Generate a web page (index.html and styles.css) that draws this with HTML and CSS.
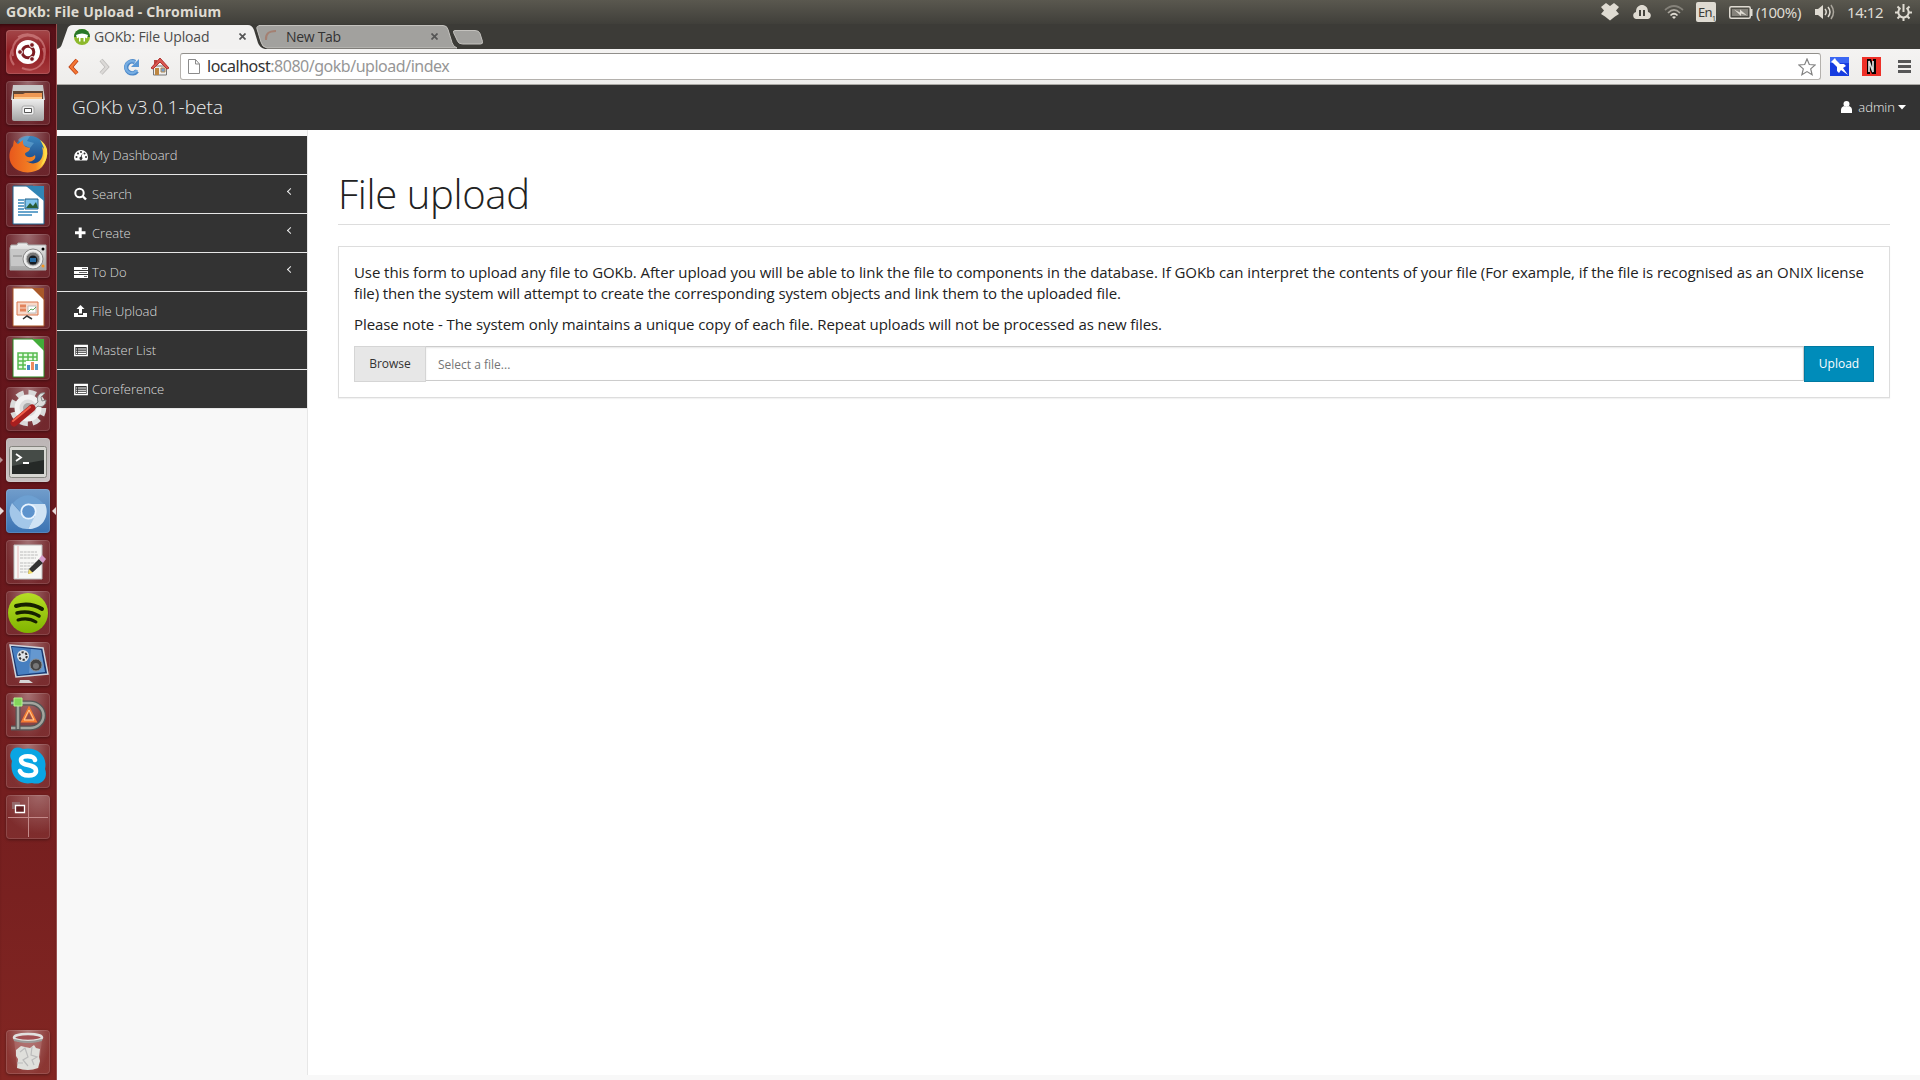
FILE: index.html
```html
<!DOCTYPE html>
<html lang="en">
<head>
<meta charset="utf-8">
<title>GOKb: File Upload</title>
<link rel="stylesheet" href="styles.css">
</head>
<body>
<header class="panel">
  <span class="panel-title">GOKb: File Upload - Chromium</span>
  <div class="indicators">
    <svg class="ind-dropbox" width="18" height="18" viewBox="0 0 18 18"><path d="M5 0 9 3 13 0 18 4 15 7.500 18 11 14 13.500 9 17.500 4 13.500 0 11 3 7.500 0 4Z"/></svg>
    <svg class="ind-cloud" width="18" height="14" viewBox="0 0 18 14"><path d="M3 14C-1 13-.5 7.500 3 7 3 2 6 0 9 0s6 2 6 7c3.500.5 4 6 0 7Z"/><path d="M7 5v6M11 5v6" stroke="#45443e" stroke-width="2"/></svg>
    <svg class="ind-wifi" width="20" height="14" viewBox="0 0 20 14" fill="none" stroke-width="1.700"><path d="M1 5Q10-3 19 5" stroke="#85827a"/><path d="M4 8Q10 2 16 8" stroke="#aaa69d"/><path d="M6.500 10.500Q10 7 13.500 10.500" stroke="#dfdbd2"/><path d="M8 12q2-1.500 4 0l-2 2Z" fill="#dfdbd2" stroke="none"/></svg>
    <span class="lang">En<sub>1</sub></span>
    <svg class="ind-battery" width="24" height="13" viewBox="0 0 24 13"><rect x=".75" y=".75" width="20.500" height="11.500" rx="1.500" fill="none" stroke="#dfdbd2" stroke-width="1.500"/><path d="M22 3h1.500v7H22z"/><path d="M3 3h16v7H3z" fill="#85827a"/><path d="M5 3.500 11 6.500V3.500l7 6-6-2v2.500Z"/></svg>
    <span class="percent">(100%)</span>
    <svg class="ind-sound" width="20" height="16" viewBox="0 0 20 16"><path d="M0 5h3l5-4v14l-5-4H0Z"/><g fill="none" stroke="#dfdbd2" stroke-width="1.500"><path d="M10 5q2.500 3 0 6M13 3q4 5 0 10"/><path d="M16 1q5 7 0 14" stroke="#aaa69d"/></g></svg>
    <span class="clock">14:12</span>
    <svg class="ind-gear" width="17" height="17" viewBox="0 0 17 17" fill="none" stroke="#dfdbd2" stroke-width="2"><path d="M5.500 4a5.200 5.200 0 1 0 6 0"/><path d="M8.500 0v8M0 8.500h3M14 8.500h3M8.500 14v3M2.500 2.500l2 2M14.500 2.500l-2 2M2.500 14.500l2-2M14.500 14.500l-2-2"/></svg>
  </div>
</header>
<div class="desktop">
<nav class="launcher">
  <div class="tile tile-dash"><svg viewBox="0 0 44 44"><g fill="none" stroke="#e5a0a0" stroke-opacity=".5" stroke-width="2"><path d="M7 26C4 10 19 0 32 9M37 18c6 15-8 26-21 20M12 7c14-8 31 3 26 21M8 35c-5-6-4-13-1-17"/></g><circle cx="22" cy="22" r="12" fill="#fff"/><circle cx="22" cy="22" r="5.800" fill="none" stroke="#7d1b21" stroke-width="3"/><g fill="#7d1b21" stroke="#fff"><circle cx="14" cy="22" r="2.400"/><circle cx="26" cy="15" r="2.400"/><circle cx="26" cy="29" r="2.400"/></g></svg></div>
  <div class="tile"><svg viewBox="0 0 44 44"><path d="M7 4h30l2 15H5Z" fill="#c9c9c9"/><path d="M7 10h30v8H7z" fill="#614534"/><path d="M8 13h9l2-1h17v7H8z" fill="#ee9854"/><path d="M8 16h28v2H8z" fill="#ffcb8f"/><path d="M6 18h32v20q0 2-2 2H8q-2 0-2-2Z" fill="url(#metal)"/><rect x="16" y="25" width="12" height="9" rx="2" fill="#eee" stroke="#aaa"/><path d="M18.500 27.500h7v4h-7z" fill="#fff" stroke="#555"/></svg></div>
  <div class="tile"><svg viewBox="0 0 44 44"><circle cx="24" cy="20" r="16" fill="url(#ocean)"/><path d="M12 8q4-5 12-4l-3 5 7 2-4 5-7-3Z" fill="#76b5dd" opacity=".5"/><path d="M34 8c8 8 9 19 2 27-8 8-24 7-30-2C2 27 3 18 7 14l1-6q2 3 4 4l5-4q-1 5 3 7l4 1c0 4-5 4-5 6 0 3 6 5 10 1 2 5-5 8-9 6 10 7 20-2 16-14 2 1 3 3 3 5q0-7-5-12Z" fill="url(#fox)"/><path d="M34 8q9 13 0 27 9-7 7-18-2-6-7-9Z" fill="#ffdc48"/></svg></div>
  <div class="tile"><svg viewBox="0 0 44 44"><path d="M7 3h20l11 11v27H7Z" fill="#fff" stroke="#1b638e"/><path d="M20 3h18v15Z" fill="#3185b5"/><path d="M12 17h6M12 20h6M12 23h6M12 26h6M12 29h20M12 32h14" stroke="#3788bc" stroke-width="1.600"/><path d="M19 16h13v10H19z" fill="#81c5ed" stroke="#1e618a"/><path d="m20 25 4-5 3 3 3-4 2 6Z" fill="#295d36"/></svg></div>
  <div class="tile"><svg viewBox="0 0 44 44"><path d="M5 11h6l1-2h9l1 2h18v25H4V14Z" fill="url(#metal)" stroke="#aaa"/><path d="M5 15h17v17H5z" fill="#c7c7c7"/><path d="M7 22h9" stroke="#888"/><circle cx="27" cy="25" r="10" fill="#eee" stroke="#888"/><circle cx="27" cy="25" r="7" fill="#777" stroke="#ccc"/><circle cx="27" cy="26" r="4.500" fill="#151b22"/><path d="M24 24h6v4h-6z" fill="#2569a1"/><circle cx="37" cy="15" r="1.500"/><circle cx="37" cy="32" r="1.500" fill="#f69522"/></svg></div>
  <div class="tile"><svg viewBox="0 0 44 44"><path d="M7 3h20l11 11v27H7Z" fill="#fff" stroke="#a85424"/><path d="M26 3h12v12Z" fill="#a95829"/><path d="M11 17h21v13H11z" fill="#f8d9ca" stroke="#d9764c"/><path d="M14 21h6M14 25h6" stroke="#e2835c" stroke-width="3"/><path d="M22 21h8v7h-8z" fill="#fff" stroke="#bbb"/><path d="m22 27 3-3 2 1 3-3" stroke="#5ba758" fill="none"/><path d="m17 34 4-3 5 3" fill="none" stroke="#333" stroke-width="1.500"/></svg></div>
  <div class="tile"><svg viewBox="0 0 44 44"><path d="M7 3h20l11 11v27H7Z" fill="#fff" stroke="#268920"/><path d="M26 3h12v12Z" fill="#42ac39"/><path d="M12 17h19v16H12zM12 21h19M12 25h19M12 29h12M17 17v16M22 17v16M27 17v9" fill="#e7fbe4" stroke="#58bc50" stroke-width="1.500"/><path d="M20 25h13v9H20z" fill="#fff"/><path d="M21 29h3v5h-3z" fill="#4088c5"/><path d="M25 26h3v8h-3z" fill="#ed8b60"/><path d="M29 28h3v6h-3z" fill="#529aca"/></svg></div>
  <div class="tile"><svg viewBox="0 0 44 44"><circle cx="22" cy="21" r="15.500" fill="none" stroke="#d9d9d9" stroke-width="5.500" stroke-dasharray="7.500 4.674"/><circle cx="22" cy="21" r="11" fill="#ddd" stroke="#f2f2f2" stroke-width="5"/><circle cx="22" cy="21" r="5" fill="#aaa"/><path d="m24 22 8-7c-2-6 2-10 7-9l-4 4 1 4 4-1c0 5-4 8-8 6l-7 6Z" fill="#ddd" stroke="#888"/><path d="m26 21-18 15" stroke="#a81e1e" stroke-width="7" stroke-linecap="round"/><path d="m24 20-17 14" stroke="#f1604b" stroke-width="2" stroke-linecap="round"/></svg></div>
  <div class="tile tile-light running"><svg viewBox="0 0 44 44"><rect x="3.500" y="8.500" width="37" height="31" rx="2" fill="#d7d7d2" stroke="#85857f"/><path d="M6 12h32v24H6z" fill="#252927"/><path d="M6 12h32v10L6 28Z" fill="#454b47"/><path d="m10 16 5 3.500-5 3.500M17 25h6" fill="none" stroke="#fff" stroke-width="1.800"/></svg></div>
  <div class="tile tile-blue active"><svg viewBox="0 0 44 44"><path d="M7 14Q22-2 38 15H24L17 26Z" fill="#6da0d2"/><path d="M6 14A17.500 17.500 0 0 0 22 40L29 28 15 24Z" fill="#a3c7e9"/><path d="M22 40A17.500 17.500 0 0 0 39 15L25 15 29 27Z" fill="#d0e3f4"/><circle cx="22.500" cy="22.500" r="8" fill="#e9f4ff"/><circle cx="22.500" cy="22.500" r="6.300" fill="#5d93cd"/></svg></div>
  <div class="tile"><svg viewBox="0 0 44 44"><path d="M8 5h28v34H8z" fill="#f7f7f5" stroke="#bbb"/><path d="M14 12h17M14 15h18M14 18h16M14 23h16M14 26h12M14 29h10M14 32h8" stroke="#bbb" stroke-dasharray="3 .7"/><path d="M12 6v32" stroke="#e8b8b8"/><path d="m23 29 10-10 4 4-10 9-5 2Z" fill="#333"/><path d="m22 34 1-5 4 4Z" fill="#f4df69"/><path d="m33 19 3-4 4 4-3 4Z" fill="#d49cca"/></svg></div>
  <div class="tile"><svg viewBox="0 0 44 44"><circle cx="22" cy="22" r="20" fill="url(#spot)"/><g fill="none" stroke="#172100" stroke-linecap="round"><path d="M10 15q14-4 26 3" stroke-width="4"/><path d="M11 22q12-3 22 3" stroke-width="3.500"/><path d="M12 29q10-3 18 2" stroke-width="3"/></g></svg></div>
  <div class="tile"><svg viewBox="0 0 44 44"><path d="m4 3 33 3 5 26-32 3Z" fill="#1a3a73" stroke="#d1d4dc" stroke-width="1.500"/><path d="m6 5 29 3 4 22-27 3Z" fill="#477fc0"/><path d="m25 7 10 1 4 22-16 1Z" fill="#79a9db" opacity=".6"/><circle cx="17" cy="14" r="6" fill="#dfe4e8"/><circle cx="17" cy="14" r="3.700" fill="none" stroke="#333" stroke-width="2" stroke-dasharray="2.200 1.675"/><circle cx="30" cy="23" r="6" fill="#444" stroke="#8a8e92"/><circle cx="30" cy="24" r="3" fill="#777"/><path d="M14 38h9l4 3H13Z" fill="#d5d5d5"/></svg></div>
  <div class="tile"><svg viewBox="0 0 44 44"><path d="M5 10h19a13 12 0 0 1 0 25H5" fill="none" stroke="#555" stroke-width="5"/><path d="M5 10h19a13 12 0 0 1 0 25H5" fill="none" stroke="#a2a59e" stroke-width="2.500"/><path d="M12 9v28" stroke="#555" stroke-width="5"/><path d="M12 9v27" stroke="#a2a59e" stroke-width="2.500"/><path d="M8 5h8v8H8z" fill="#83d75c" stroke="#b2f590"/><path d="m23 16 6 12H17Z" fill="none" stroke="#f47b32" stroke-width="3"/><path d="m23 17 5 10H18Z" fill="none" stroke="#ffd09b"/></svg></div>
  <div class="tile"><svg viewBox="0 0 44 44"><path d="M5 8q4-7 12-3c14-3 25 7 22 20 3 7-1 17-13 14C12 42 3 30 6 17q-3-4-1-9Z" fill="#0aa5e3"/><path d="M29 16c-1-5-14-5-14 0 0 7 15 3 15 11 0 6-14 6-16 0" fill="none" stroke="#fff" stroke-width="4.600" stroke-linecap="round"/></svg></div>
  <div class="tile tile-work"><svg viewBox="0 0 44 44"><path d="M2 22.500h40M22.500 2v40" stroke="#c48a8a" stroke-width="1"/><path d="M6 7h8v3H9v4H6Z" fill="#94696b"/><path d="M9.500 10.500h9v7h-9z" fill="#622023" stroke="#fff" stroke-width="1.300"/></svg></div>
  <div class="tile tile-trash"><svg viewBox="0 0 44 44"><path d="m8 9 3 29q10 4 22 0l3-29Z" fill="#c78d8d" opacity=".35"/><path d="m10 20 5-4 4 1 5 1 4-3 2 3 4 1-1 8 1 4-2 7q-10 4-21 0l1-9-2-3Z" fill="#dfdfdb"/><path d="m14 22 5-4 3 9-5 3 5 6M26 17l-1 8 6 2-5 3 2 5M11 33h6" stroke="#bbb" stroke-width="1.200" fill="none"/><ellipse cx="22" cy="7.500" rx="14" ry="3.500" fill="#a15053" stroke="#e1e1df" stroke-width="2.500"/><path d="M8 10q14 4 28 0" fill="none" stroke="#9a9a98" stroke-width="2"/></svg></div>
</nav>
<main class="browser">
  <div class="tabs">
    <svg class="tab-shapes" width="430" height="25" viewBox="0 0 430 25"><path d="M202 1.500H386q4 0 5 4l4 13q1 4 5 5.500H210q-5-1-6-6l-4-13Q199 2 203 1.500Z" fill="#a2a19e" stroke="#c4c2be"/><path d="M398 6.500h20q4 0 5 3l2.500 8q.5 2.500-2 2.500h-18q-4 0-5-3l-4-8.500q-.5-2 1.500-2Z" fill="#a2a19e" stroke="#c4c2be"/><path d="M0 25q4-1 5-5l5-14q1-5 6-5H191q4 0 6 5l4 13q2 5 7 6Z" fill="#f2f1f0"/></svg>
    <div class="tab tab-current"><svg width="16" height="16" viewBox="0 0 16 16"><circle cx="8" cy="8" r="8" fill="#8db92c"/><path d="M0 8a8 8 0 0 1 16 0Z" fill="#287629"/><path d="M2 6q6-3 12 0l-1 3q-1.500 1-2-1v4.500H9.500V9h-3v3.500H5V8q-1 2-2 1Z" fill="#fff"/></svg><span>GOKb: File Upload</span><svg class="close" width="7" height="7" viewBox="0 0 7 7"><path d="m.5.5 6 6m0-6-6 6"/></svg></div>
    <div class="tab tab-other"><svg width="16" height="16" viewBox="0 0 16 16"><path d="M2 11Q1 2 12 2" fill="none" stroke="#a48072" stroke-width="2"/></svg><span>New Tab</span><svg class="close" width="7" height="7" viewBox="0 0 7 7"><path d="m.5.5 6 6m0-6-6 6"/></svg></div>
  </div>
  <div class="toolbar">
    <svg class="nav-back" width="11" height="18" viewBox="0 0 11 18"><path d="M9 2 3 9l6 6.500" fill="none" stroke="#b83e13" stroke-width="4"/><path d="M9 2 3 9l6 6.500" fill="none" stroke="#f47735" stroke-width="2.500"/></svg>
    <svg class="nav-next" width="11" height="18" viewBox="0 0 11 18"><path d="m2 2 6 7-6 6.500" fill="none" stroke="#bdbbb9" stroke-width="4"/><path d="m2 2 6 7-6 6.500" fill="none" stroke="#dbd9d7" stroke-width="2.500"/></svg>
    <svg class="nav-reload" width="17" height="18" viewBox="0 0 17 18"><path d="M14 13A6 6 0 1 1 12 4" fill="none" stroke="#4a87c8" stroke-width="4.500"/><path d="M14 12A6 6 0 1 1 12 4" fill="none" stroke="#76ade2" stroke-width="2.500"/><path d="M16 1v8H8Z" fill="#5b98d5"/></svg>
    <svg class="nav-home" width="18" height="19" viewBox="0 0 18 19"><path d="M3 3h3v5H3z" fill="#bd4540"/><path d="M2.500 9h13v9h-13z" fill="#eee" stroke="#777"/><path d="m0 11 9-10 9 10-2 1-7-7-7 7Z" fill="#dc5751" stroke="#ae3531"/><path d="M4 11h4v7H4z" fill="#bd8640"/><path d="M10 11h4v4h-4z" fill="#749fcf" stroke="#b58b52"/></svg>
    <div class="omnibox">
      <svg width="12" height="15" viewBox="0 0 12 15"><path d="M.5.500h7L11.500 5v9.500H.500ZM7.500.500V5h4" fill="#fff" stroke="#8b8b8b"/></svg>
      <span class="url"><b>localhost</b>:8080/gokb/upload/index</span>
      <svg class="star" width="18" height="18" viewBox="0 0 18 18"><path d="m9 1 2.300 5.500 5.900.5-4.500 3.900 1.400 5.800L9 13.600l-5.100 3.100 1.400-5.800L.8 7l5.900-.5Z" fill="#fff" stroke="#818181" stroke-width="1.200"/></svg>
    </div>
    <svg class="ext-pin" width="19" height="19" viewBox="0 0 19 19"><path d="M0 0h19v19H0z" fill="#173de0"/><path d="M0 0h19v6H0z" fill="#3b67f3"/><path d="m5 1 1 2 4 4 4 0 2 2-3 2 5 7-7-5-2 3-2-2V10L3 6 1 5Z" fill="#fff"/></svg>
    <svg class="ext-n" width="19" height="19" viewBox="0 0 19 19"><path d="M0 0h19v19H0z" fill="#ee3028"/><path d="M5 2h4l2 5V2h3v15h-4l-2-4v4H5Z"/><path d="M7 15V4l4 11V4" fill="none" stroke="#ddd" stroke-width="1.700"/></svg>
    <svg class="menu" width="13" height="13" viewBox="0 0 13 13"><path d="M0 1.500h13M0 6.500h13M0 11.500h13" stroke="#575757" stroke-width="3"/></svg>
  </div>
  <div class="navbar">
    <span class="brand">GOKb v3.0.1-beta</span>
    <div class="user"><svg width="11" height="12" viewBox="0 0 11 12"><circle cx="5.500" cy="3" r="3"/><path d="M0 12V9q0-3 3-4 2.500 2 5 0 3 1 3 4v3Z"/></svg><span>admin</span><svg class="caret" width="8" height="5" viewBox="0 0 8 5"><path d="M0 0h8L4 4.500Z"/></svg></div>
  </div>
  <div class="page">
    <aside class="sidebar">
      <a class="item"><svg viewBox="0 0 14 14"><path d="M0 9a7 7 0 0 1 14 0q0 2-1 3.500H1Q0 11 0 9Z"/><g fill="#333"><circle cx="2.500" cy="9" r="1"/><circle cx="4" cy="5.500" r="1"/><circle cx="7" cy="4" r="1"/><circle cx="10.500" cy="5.500" r="1"/><circle cx="12" cy="9" r="1"/><path d="m8.500 5-.8 4a1.500 1.500 0 1 1-1-.2Z"/></g></svg><span>My Dashboard</span></a>
      <a class="item"><svg viewBox="0 0 14 14"><path d="m8.500 9 3.500 3.500" stroke="#fff" stroke-width="2.400"/><circle cx="5.500" cy="6" r="4.200" fill="none" stroke="#fff" stroke-width="2"/></svg><span>Search</span><i class="arrow"></i></a>
      <a class="item"><svg viewBox="0 0 14 14"><path d="M4.700 1.500h3v3.800h3.800v3H7.700V12h-3V8.300H1v-3h3.700Z"/></svg><span>Create</span><i class="arrow"></i></a>
      <a class="item"><svg viewBox="0 0 14 14"><path d="M0 2h14v3H0zM0 6h14v3H0zM0 10h14v3H0z"/><path d="M8 3.500h5M5 7.500h8M10 11.500h3" stroke="#666"/></svg><span>To Do</span><i class="arrow"></i></a>
      <a class="item"><svg viewBox="0 0 14 14"><path d="m6.500 1 4 4H8v4.500H5V5H2.500ZM0 9h4v2h5V9h4v4H0Z"/></svg><span>File Upload</span></a>
      <a class="item"><svg viewBox="0 0 14 14"><path d="M.7 2.500h12.600v10H.7Z" fill="none" stroke="#fff" stroke-width="1.300"/><path d="M0 2h14v2H0z"/><path d="M2 6h1.200M4 6h8M2 8.200h1.200M4 8.200h8M2 10.400h1.200M4 10.400h8" stroke="#fff" stroke-width="1.100"/></svg><span>Master List</span></a>
      <a class="item"><svg viewBox="0 0 14 14"><path d="M.7 2.500h12.600v10H.7Z" fill="none" stroke="#fff" stroke-width="1.300"/><path d="M0 2h14v2H0z"/><path d="M2 6h1.200M4 6h8M2 8.200h1.200M4 8.200h8M2 10.400h1.200M4 10.400h8" stroke="#fff" stroke-width="1.100"/></svg><span>Coreference</span></a>
    </aside>
    <section class="content">
      <h1>File upload</h1>
      <div class="well">
        <p>Use this form to upload any file to GOKb. After upload you will be able to link the file to components in the database. If GOKb can interpret the contents of your file (For example, if the file is recognised as an ONIX license<br><span class="tail">file) then the system will attempt to create the corresponding system objects and link them to the uploaded file.</span></p>
        <p>Please note - The system only maintains a unique copy of each file. Repeat uploads will not be processed as new files.</p>
        <div class="upload-row"><span class="browse">Browse</span><input class="file-name" placeholder="Select a file..." readonly><button class="upload">Upload</button></div>
      </div>
    </section>
  </div>
</main>
</div>
<svg class="defs" width="0" height="0"><defs>
  <linearGradient id="metal" x2="0" y2="1"><stop stop-color="#eee"/><stop offset="1" stop-color="#a3a3a3"/></linearGradient>
  <linearGradient id="ocean" x2="0" y2="1"><stop stop-color="#3b87bf"/><stop offset="1" stop-color="#173b7b"/></linearGradient>
  <linearGradient id="fox"><stop stop-color="#e8581c"/><stop offset=".7" stop-color="#f58825"/><stop offset="1" stop-color="#ffd840"/></linearGradient>
  <linearGradient id="spot" x2="0" y2="1"><stop stop-color="#b6dd24"/><stop offset="1" stop-color="#80b400"/></linearGradient>
</defs></svg>
</body>
</html>
```
FILE: styles.css
```css
* { box-sizing: border-box; }
body { margin: 0; width: 1920px; height: 1080px; overflow: hidden; display: flex; flex-direction: column; font-family: "Open Sans", "Noto Sans", sans-serif; background: #fff; }
svg { display: block; flex: none; }
.defs { position: absolute; }

.panel { height: 24px; flex: none; display: flex; align-items: center; justify-content: space-between; padding: 0 8px 0 6px; background: linear-gradient(#5a584f, #403f3a); color: #dfdbd2; }
.panel-title { font: bold 14px/24px "Noto Sans", sans-serif; letter-spacing: .2px; white-space: nowrap; }
.indicators { display: flex; align-items: center; fill: #dfdbd2; font: 15px/24px "Noto Sans", sans-serif; white-space: nowrap; }
.ind-cloud { margin-left: 14px; }
.ind-wifi { margin-left: 13px; }
.lang { margin-left: 12px; width: 20px; height: 20px; border-radius: 2px; background: #dfdbd2; color: #3c3b37; font-size: 13px; line-height: 20px; padding-left: 2px; letter-spacing: -.7px; }
.lang sub { font-size: 7px; line-height: 0; }
.ind-battery { margin-left: 13px; }
.percent { margin-left: 3px; width: 48px; letter-spacing: -.35px; }
.ind-sound { margin-left: 11px; }
.clock { margin-left: 12px; width: 36px; letter-spacing: -.45px; }
.ind-gear { margin-left: 12px; }

.desktop { flex: 1; display: flex; min-height: 0; }
.launcher { width: 57px; flex: none; display: flex; flex-direction: column; gap: 7px; padding: 6px 0 6px 6px; border-right: 1px solid #99504f; background: linear-gradient(#5a1018, #6b191d 55%, #822622); box-shadow: inset 0 4px 4px -3px #2a0508; }
.tile { position: relative; width: 44px; height: 44px; flex: none; border-radius: 4px; background: radial-gradient(ellipse at 50% 0, rgba(255,255,255,.38), rgba(255,255,255,.08) 75%); box-shadow: inset 0 0 0 1px rgba(255,255,255,.13), 0 1px 3px rgba(0,0,0,.35); }
.tile-dash { background: linear-gradient(#a34749, #911c22 50%, #a5393c); }
.tile-light { background: linear-gradient(#bcb5b5, #c9c3c3); }
.tile-blue { background: linear-gradient(#719dcb, #3b73b3); }
.tile-work { background: radial-gradient(circle at 75% 0, rgba(255,255,255,.32), rgba(255,255,255,.06) 70%); }
.tile-trash { margin-top: auto; }
.running::before, .active::before, .active::after { content: ""; position: absolute; top: 18px; border: 4px solid transparent; }
.running::before { left: -7px; border-left-color: #b89495; }
.active::before { left: -6px; border-left-color: #e7dada; }
.active::after { right: -6px; border-right-color: #e7dada; }

.browser { flex: 1; min-width: 0; display: flex; flex-direction: column; }
.tabs { position: relative; height: 25px; flex: none; display: flex; background: #3c3b37; }
.tab-shapes { position: absolute; left: 0; top: 0; }
.tab { position: relative; display: flex; align-items: center; font-size: 14px; color: #4c4c4c; white-space: nowrap; }
.tab-current { padding-left: 17px; width: 207px; }
.tab-current span { margin-left: 4px; width: 145px; letter-spacing: -.18px; }
.tab-other { width: 190px; color: #333; }
.tab-other span { margin-left: 6px; width: 145px; letter-spacing: -.3px; }
.close { fill: none; stroke: #555; stroke-width: 1.7; }
.toolbar { height: 36px; flex: none; display: flex; align-items: center; padding: 0 9px 0 11px; background: linear-gradient(#f4f3f2, #eeedeb); border-bottom: 1px solid #aaa8a4; }
.nav-next { margin-left: 20px; }
.nav-reload { margin-left: 13px; }
.nav-home { margin-left: 11px; }
.omnibox { flex: 1; margin-left: 11px; height: 27px; display: flex; align-items: center; padding: 0 4px 0 7px; border: 1px solid #b4b1ad; border-top-color: #918f8b; border-radius: 3px; background: #fff; }
.url { flex: 1; margin: -2px 0 0 7px; font: 16px/24px "Noto Sans", sans-serif; letter-spacing: -.48px; color: #969696; }
.url b { font-weight: 400; color: #333; }
.ext-pin { margin-left: 9px; }
.ext-n { margin-left: 13px; }
.menu { margin-left: 17px; }

.navbar { height: 45px; flex: none; display: flex; align-items: center; justify-content: space-between; padding: 0 14px 2px 15px; background: #333; color: #eee; }
.brand { font-size: 19px; font-weight: 300; letter-spacing: .06px; }
.user { display: flex; align-items: center; fill: #fff; font-size: 13px; font-weight: 300; }
.user span { margin: 0 3px 0 6px; }
.caret { margin-top: 2px; }

.page { flex: 1; min-height: 0; display: flex; padding-bottom: 5px; background: #f8f8f8; }
.sidebar { width: 250px; flex: none; padding-top: 6px; }
.item { display: flex; align-items: center; height: 39px; padding: 0 14px 0 17px; border-bottom: 1px solid #e7e7e7; background: #333; color: #ddd; font-size: 13px; font-weight: 300; }
.item svg { width: 14px; height: 14px; margin-right: 4px; fill: #fff; }
.arrow { width: 5px; height: 5px; margin: -6px 0 0 auto; border: solid #eee; border-width: 0 0 1.5px 1.5px; transform: rotate(45deg); }
.content { flex: 1; min-width: 0; padding: 0 30px; border-left: 1px solid #e7e7e7; background: #fff; color: #222; }
h1 { height: 55px; margin: 40px 0 21px; border-bottom: 1px solid #ddd; font-size: 40px; font-weight: 300; line-height: 47px; letter-spacing: -.35px; }
.well { height: 152px; padding: 15px 15px 0; border: 1px solid #ddd; box-shadow: 0 1px 1px rgba(0,0,0,.05); }
p { margin: 0 0 10px; font-size: 15px; line-height: 21px; letter-spacing: -.073px; white-space: nowrap; }
p + p { letter-spacing: -.083px; }
.tail { letter-spacing: -.102px; }
.upload-row { display: flex; align-items: flex-start; padding-top: 1px; }
.browse, .upload { height: 36px; border: 1px solid #d5d5d5; font: 12px/34px "Open Sans", sans-serif; text-align: center; }
.browse { width: 72px; background: #e7e7e7; color: #333; }
.file-name { flex: 1; min-width: 0; height: 35px; padding: 2px 12px 0; border: 1px solid #ccc; border-left: 0; outline: 0; box-shadow: inset 0 1px 2px rgba(0,0,0,.1); font: 12px "Open Sans", sans-serif; }
.file-name::placeholder { color: #757575; }
.upload { width: 70px; padding: 0; border-color: #0079a1; background: #008cba; color: #fff; }
```
